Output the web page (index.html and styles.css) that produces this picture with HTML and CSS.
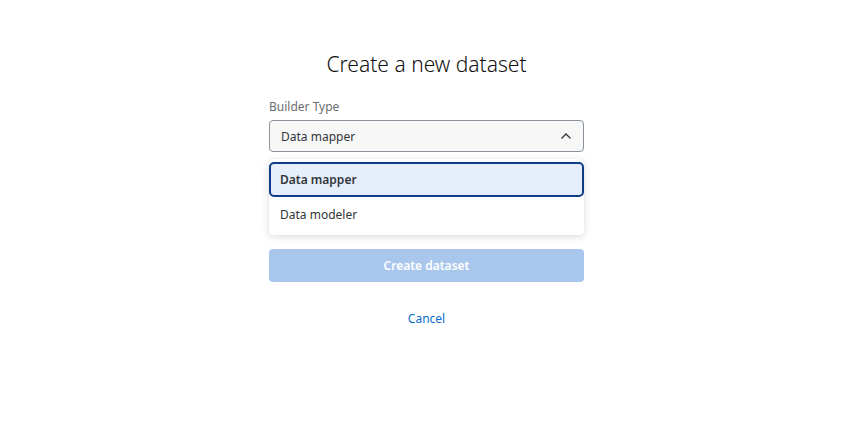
FILE: index.html
```html
<!DOCTYPE html>
<html lang="en">
<head>
    <meta charset="UTF-8">
    <meta name="viewport" content="width=device-width, initial-scale=1.0">
    <title>Create a new dataset</title>
    <link rel="stylesheet" href="styles.css">
</head>
<body>
    <div class="container">
        <h1>Create a new dataset</h1>
        <div class="form-group">
            <label for="builderType">Builder Type</label>
            <div class="select" id="builderType">
                <span>Data mapper</span>
                <svg class="chevron" width="12" height="8" viewBox="0 0 12 8">
                    <path d="M1.5 6.5 L6 2 L10.5 6.5" fill="none" stroke="#32363a" stroke-width="1.3"/>
                </svg>
            </div>
            <ul class="menu">
                <li class="menu-item selected">Data mapper</li>
                <li class="menu-item">Data modeler</li>
            </ul>
        </div>
        <button type="button" class="form-submit" disabled>Create dataset</button>
        <a href="#" class="cancel-link">Cancel</a>
    </div>
</body>
</html>
```

FILE: styles.css
```css
body, html {
    margin: 0;
    padding: 0;
    font-family: 'Noto Sans', 'Liberation Sans', sans-serif;
    background-color: #fff;
    color: #32363a;
}
.container {
    width: 315px;
    margin-left: calc(50% - 156px);
    padding-top: 48px;
    display: flex;
    flex-direction: column;
}
h1 {
    margin: 0;
    font-size: 21px;
    font-weight: 300;
    text-align: center;
    color: #111;
    line-height: 32px;
}
.form-group {
    position: relative;
    margin-top: 19px;
}
.form-group label {
    display: block;
    font-size: 12px;
    color: #6a6d70;
    line-height: 16px;
    margin-bottom: 5px;
}
.select {
    height: 30px;
    border: 1px solid #89919a;
    border-radius: 4px;
    background-color: #f7f7f7;
    display: flex;
    align-items: center;
    justify-content: space-between;
    padding: 0 11px;
    font-size: 12px;
}
.menu {
    position: absolute;
    left: 0;
    right: 0;
    top: 60px;
    margin: 0;
    padding: 3px 0;
    list-style: none;
    background: #fff;
    border-radius: 4px;
    box-shadow: 0 2px 8px rgba(0, 0, 0, 0.13), 0 0 1px rgba(0, 0, 0, 0.12);
}
.menu-item {
    height: 35px;
    line-height: 35px;
    padding: 0 11px;
    font-size: 12px;
}
.menu-item.selected {
    height: 31px;
    line-height: 31px;
    border: 2px solid #0f3d87;
    border-radius: 5px;
    background-color: #e5eefa;
    font-weight: 600;
    padding: 0 9px;
}
.form-submit {
    margin-top: 97px;
    height: 33px;
    border: none;
    border-radius: 4px;
    background-color: #a9c7ed;
    color: #fff;
    font-family: inherit;
    font-size: 12px;
    font-weight: 600;
}
.cancel-link {
    align-self: center;
    margin-top: 28px;
    font-size: 12px;
    color: #0a6ed1;
    text-decoration: none;
}
```
